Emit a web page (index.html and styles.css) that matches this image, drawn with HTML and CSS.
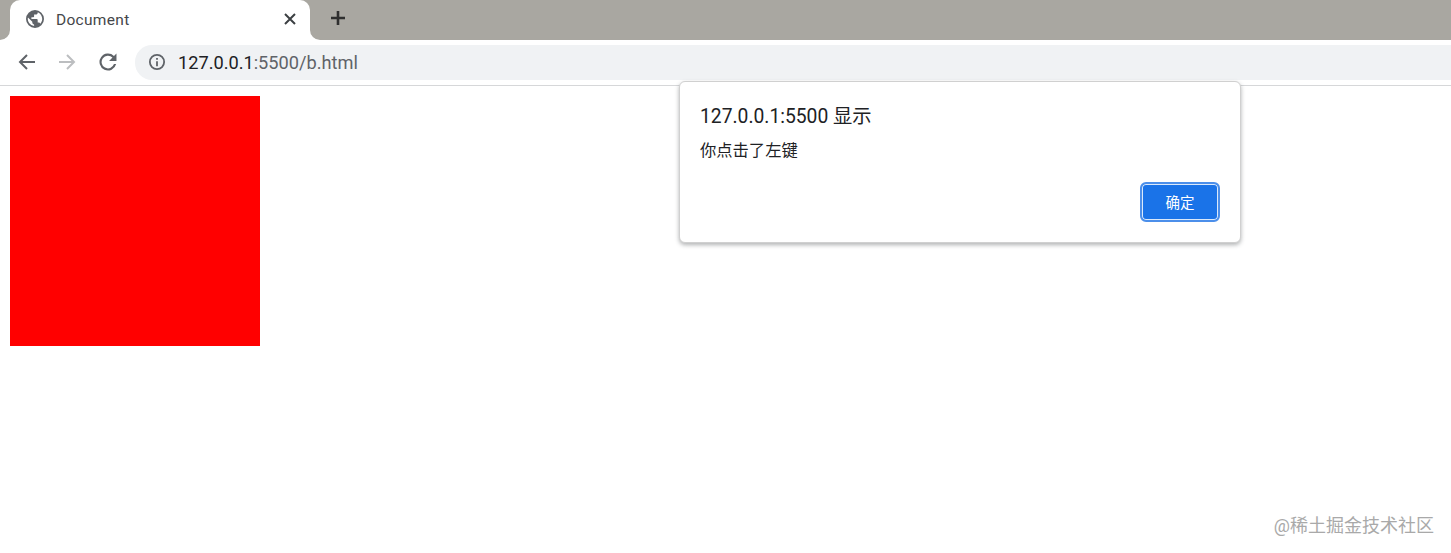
FILE: index.html
```html
<!DOCTYPE html>
<html lang="zh">
<head>
<meta charset="utf-8">
<title>Document</title>
<link rel="stylesheet" href="styles.css">
</head>
<body>
<div class="tabstrip">
  <div class="tab">
    <svg class="globe" width="18" height="18" viewBox="2 2 20 20"><path fill="#5f6368" d="M12 2a10 10 0 1 0 0 20 10 10 0 0 0 0-20zm-1 17.900A8 8 0 0 1 4.200 10.200L9 15v1c0 1.100.9 2 2 2v1.900zm6.900-2.500A2 2 0 0 0 16 16h-1v-3c0-.6-.4-1-1-1H8v-2h2c.6 0 1-.4 1-1V7h2c1.100 0 2-.9 2-2v-.4a8 8 0 0 1 2.900 12.800z"/></svg>
    <span class="tab-title">Document</span>
    <svg class="close" width="14" height="14" viewBox="0 0 14 14"><path d="M2 2l10 10M12 2L2 12" stroke="#3c4043" stroke-width="2" fill="none"/></svg>
  </div>
  <svg class="plus" width="16" height="16" viewBox="0 0 16 16"><path d="M8 1v14M1 8h14" stroke="#2f2f2f" stroke-width="2.600" fill="none"/></svg>
</div>
<div class="toolbar">
  <span class="nav"><svg width="20" height="20" viewBox="0 0 20 20"><path d="M18 10H3M10 3l-7 7 7 7" stroke="#5f6368" stroke-width="2" fill="none"/></svg></span>
  <span class="nav"><svg width="20" height="20" viewBox="0 0 20 20"><path d="M2 10h15M10 3l7 7-7 7" stroke="#bcbec0" stroke-width="2" fill="none"/></svg></span>
  <span class="nav"><svg class="reload" width="18" height="18" viewBox="3.500 3.500 17 17"><path fill="#5f6368" d="M17.650 6.350A8 8 0 1 0 19.730 14h-2.080a6 6 0 1 1-1.410-6.240L13 11h7V4l-2.350 2.350z"/></svg></span>
  <div class="omnibox">
    <svg width="18" height="18" viewBox="0 0 24 24"><circle cx="12" cy="12" r="9.500" fill="none" stroke="#5f6368" stroke-width="2.400"/><path d="M12 11v6.500M12 6.500v2.500" stroke="#5f6368" stroke-width="2.400" fill="none"/></svg>
    <span class="url"><span class="host">127.0.0.1</span>:5500/b.html</span>
  </div>
</div>
<main class="page">
  <div class="square"></div>
</main>
<div class="dialog">
  <div class="dialog-title">127.0.0.1:5500 显示</div>
  <div class="dialog-msg">你点击了左键</div>
  <div class="dialog-actions"><button class="ok">确定</button></div>
</div>
<div class="watermark">@稀土掘金技术社区</div>
</body>
</html>
```
FILE: styles.css
```css
* { box-sizing: border-box; }
html, body { margin: 0; height: 553px; overflow: hidden; background: #fff; }
body { font-family: "Roboto", "Noto Sans CJK SC", sans-serif; position: relative; }
.tabstrip { height: 40px; background: #a9a7a1; display: flex; align-items: center; padding-left: 10px; overflow: hidden; }
.tab { width: 300px; height: 40px; background: #fff; border-radius: 10px 10px 0 0; display: flex; align-items: center; padding: 0 13px 2px 16px; position: relative; }
.tab::before, .tab::after { content: ""; position: absolute; bottom: 0; width: 10px; height: 10px; background: #a9a7a1; }
.tab::before { left: -10px; border-radius: 0 0 10px 0; box-shadow: 5px 5px 0 5px #fff; }
.tab::after { right: -10px; border-radius: 0 0 0 10px; box-shadow: -5px 5px 0 5px #fff; }
.globe { flex: none; }
.tab-title { margin-left: 12px; font-size: 15.500px; color: #45474a; flex: 1; letter-spacing: .3px; margin-top: 1px; }
.close { flex: none; }
.plus { margin-left: 20px; margin-top: -4px; }
.toolbar { height: 46px; background: #fff; border-bottom: 1px solid #d6d7d9; display: flex; align-items: center; padding: 0 0 2px 7px; }
.nav { flex: none; width: 40px; display: flex; justify-content: center; }
.reload { margin-left: 2px; }
.omnibox { flex: 1; height: 35px; margin-left: 8px; margin-top: 1px; border-radius: 17px 0 0 17px; background: #f0f2f4; display: flex; align-items: center; padding-left: 13px; gap: 12px; }
.url { font-size: 18.200px; color: #5f6368; }
.host { color: #202124; }
.page { padding: 10px; }
.square { width: 250px; height: 250px; background: #f00; }
.dialog { position: absolute; left: 679px; top: 81px; width: 562px; height: 162px; background: #fff; border: 1px solid #d0d0d0; border-radius: 6px; box-shadow: 0 2px 4px rgba(60,64,67,.4); padding: 24px 20px 0; display: flex; flex-direction: column; }
.dialog-title { font-size: 19.300px; line-height: 22px; color: #202124; }
.dialog-msg { margin-top: 13px; font-size: 16.300px; line-height: 20px; color: #202124; }
.dialog-actions { margin-top: 21px; display: flex; justify-content: flex-end; }
.ok { width: 80px; height: 40px; background: #1a73e8; color: #fff; border: 2px solid #4c8fea; box-shadow: inset 0 0 0 1px #dbe9fb; border-radius: 6px; font: 14.500px "Noto Sans CJK SC", sans-serif; padding: 0 0 1px; }
.watermark { position: absolute; right: 17px; top: 514px; font-size: 18px; line-height: 24px; color: #a9a9a9; }
```
